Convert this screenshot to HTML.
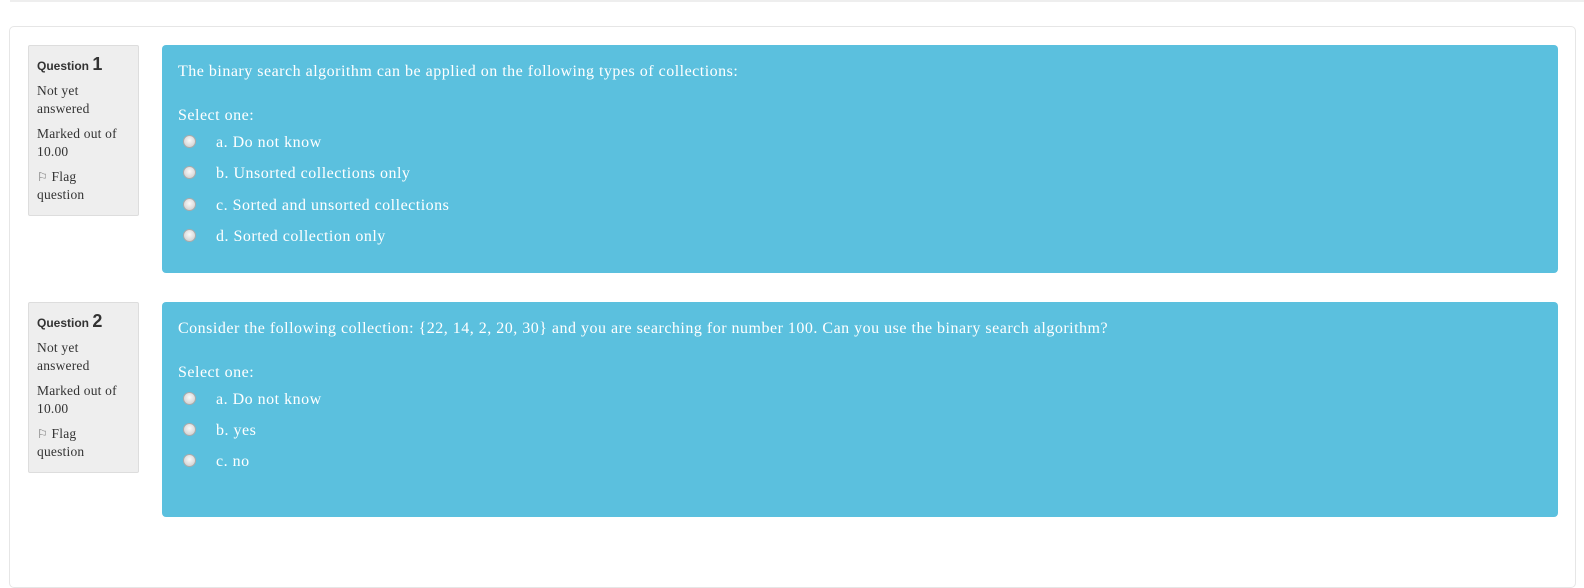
<!DOCTYPE html>
<html><head><style>
body{margin:0;width:1584px;height:543px;background:#fff;position:relative;overflow:hidden;font-family:Georgia,"Liberation Serif",serif;}
.top{position:absolute;left:10px;right:0;top:0;height:2px;background:#eee;}
.outer{position:absolute;left:9px;top:26px;width:1565px;height:560px;border:1px solid #e6e6e6;border-radius:5px;}
.info{position:absolute;left:28px;width:109px;background:#eee;border:1px solid #ddd;border-radius:2px;font-size:13.5px;letter-spacing:.2px;color:#333;line-height:18px;}
.info .q{font-family:"Liberation Sans",Arial,sans-serif;font-weight:bold;font-size:12px;letter-spacing:0;margin:9px 0 0 8px;}
.info .q span{font-size:18px;}
.info p{margin:7px 0 0 8px;}
.blue{position:absolute;left:162px;width:1396px;background:#5bc0de;border-radius:4px;color:#fff;font-size:16px;letter-spacing:.5px;}
.blue .t{position:absolute;left:16px;top:18px;}
.blue .s{position:absolute;left:16px;top:62px;}
.opt{position:absolute;left:54px;}
.r{position:absolute;left-32px;left:-33px;top:1px;width:11px;height:11px;border-radius:50%;background:radial-gradient(circle at 50% 40%,#fafafa,#c8c8c8);border:1px solid #aaa;}
</style></head><body>
<div class="top"></div>
<div class="outer"></div>

<div class="info" style="top:45px;height:169px;">
<div class="q">Question <span>1</span></div>
<p>Not yet<br>answered</p>
<p>Marked out of<br>10.00</p>
<p><span style="font-size:12px;color:#666">⚐</span> Flag<br>question</p>
</div>
<div class="blue" style="top:45px;height:228px;">
<div class="t">The binary search algorithm can be applied on the following types of collections:</div>
<div class="s">Select one:</div>
<div class="opt" style="top:89px"><div class="r"></div>a. Do not know</div>
<div class="opt" style="top:120px"><div class="r"></div>b. Unsorted collections only</div>
<div class="opt" style="top:152px"><div class="r"></div>c. Sorted and unsorted collections</div>
<div class="opt" style="top:183px"><div class="r"></div>d. Sorted collection only</div>
</div>

<div class="info" style="top:302px;height:169px;">
<div class="q">Question <span>2</span></div>
<p>Not yet<br>answered</p>
<p>Marked out of<br>10.00</p>
<p><span style="font-size:12px;color:#666">⚐</span> Flag<br>question</p>
</div>
<div class="blue" style="top:302px;height:215px;">
<div class="t">Consider the following collection: {22, 14, 2, 20, 30} and you are searching for number 100. Can you use the binary search algorithm?</div>
<div class="s">Select one:</div>
<div class="opt" style="top:89px"><div class="r"></div>a. Do not know</div>
<div class="opt" style="top:120px"><div class="r"></div>b. yes</div>
<div class="opt" style="top:151px"><div class="r"></div>c. no</div>
</div>
</body></html>
